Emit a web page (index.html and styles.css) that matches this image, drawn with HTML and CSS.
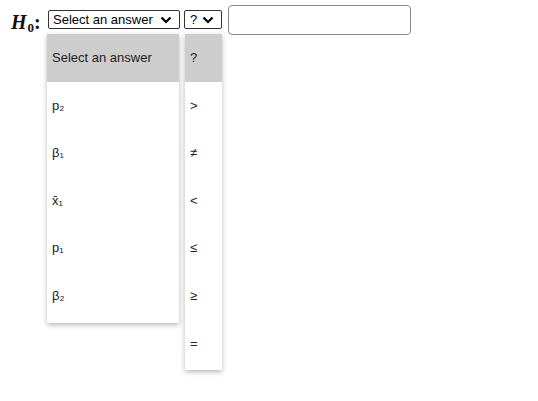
FILE: index.html
```html
<!DOCTYPE html>
<html lang="en">
<head>
    <meta charset="UTF-8">
    <title>Hypothesis</title>
    <link rel="stylesheet" href="styles.css">
</head>
<body>

<div class="question">
    <span class="label"><i>H</i><span class="sub">0</span>:</span>

    <!-- first select with its open list -->
    <div class="select-wrap">
        <div class="select wide">
            <span>Select an answer</span>
            <svg class="chev" width="12" height="8" viewBox="0 0 12 8"><path d="M1.5 1.5 L6 6 L10.5 1.5" fill="none" stroke="#000" stroke-width="2.2"/></svg>
        </div>
        <div class="option-list list-wide">
            <div class="opt active">Select an answer</div>
            <div class="opt">p₂</div>
            <div class="opt">β₁</div>
            <div class="opt">x̄₁</div>
            <div class="opt">p₁</div>
            <div class="opt">β₂</div>
        </div>
    </div>

    <!-- operator select -->
    <div class="select-wrap">
        <div class="select narrow">
            <span>?</span>
            <svg class="chev" width="12" height="8" viewBox="0 0 12 8"><path d="M1.5 1.5 L6 6 L10.5 1.5" fill="none" stroke="#000" stroke-width="2.2"/></svg>
        </div>
        <div class="option-list list-narrow">
            <div class="opt active">?</div>
            <div class="opt">&gt;</div>
            <div class="opt">≠</div>
            <div class="opt">&lt;</div>
            <div class="opt">≤</div>
            <div class="opt">≥</div>
            <div class="opt">=</div>
        </div>
    </div>

    <input type="text" class="answer">
</div>

</body>
</html>
```

FILE: styles.css
```css
body {
    margin: 0;
    padding-bottom: 25px;
    background: #fff;
    font-family: "Liberation Sans", Arial, sans-serif;
}

.question {
    display: flex;
    align-items: flex-start;
    padding: 5px 0 0 10px;
}

.label {
    font-family: "Liberation Serif", "Times New Roman", serif;
    font-size: 20px;
    font-weight: bold;
    line-height: 20px;
    margin: 7px 6px 0 1px;
    width: 31px;
    color: #111;
}

.label .sub {
    font-size: 13px;
    position: relative;
    top: 3px;
    margin-left: 1px;
}

.select-wrap {
    display: flex;
    flex-direction: column;
    margin: 5px 4px 0 0;
}

.select {
    box-sizing: border-box;
    height: 19px;
    border: 1px solid #333;
    border-radius: 2px;
    display: flex;
    align-items: center;
    justify-content: space-between;
    padding: 0 7px 0 4px;
    font-size: 13px;
    color: #000;
}

.wide {
    width: 132px;
}

.narrow {
    width: 38px;
    padding-left: 5px;
}

.chev {
    display: block;
}

.answer {
    box-sizing: border-box;
    width: 183px;
    height: 30px;
    border: 1px solid #8a8a8a;
    border-radius: 4px;
    margin-left: 2px;
}

/* open option lists */
.option-list {
    margin-top: 5px;
    padding-bottom: 3px;
    background: #fff;
    box-shadow: 0 2px 5px rgba(0, 0, 0, 0.28);
    font-size: 13px;
    color: #222;
}

.opt {
    height: 47.6px;
    line-height: 47.6px;
    padding-left: 5px;
}

.opt.active {
    background-color: #cdcdcd;
}

.list-wide {
    margin-left: -1px;
    width: 132px;
}

.list-narrow {
    margin-left: 1px;
    width: 37px;
}
```
